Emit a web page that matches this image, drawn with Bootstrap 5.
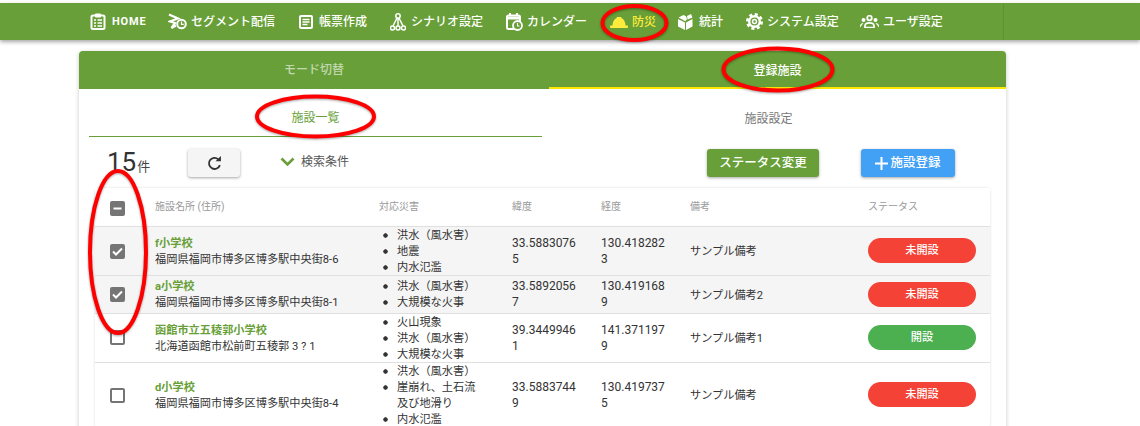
<!DOCTYPE html>
<html lang="ja">
<head>
<meta charset="utf-8">
<title>施設一覧</title>
<link href="https://cdn.jsdelivr.net/npm/bootstrap@5.3.0/dist/css/bootstrap.min.css" rel="stylesheet">
<style>
html,body{height:426px;overflow:hidden;background:#fff}
body{position:relative;font-family:Roboto,"Noto Sans CJK JP","Liberation Sans",sans-serif;font-size:12px;color:#333;padding-top:3px}
.topbar{height:37px;background:#689f38;box-shadow:0 2px 4px rgba(0,0,0,.35);padding:0 0 0 90px;flex-wrap:nowrap;justify-content:flex-start;align-items:center;position:relative}
.topbar::after{content:"";position:absolute;left:1003px;top:0;bottom:0;width:1px;background:rgba(0,0,0,.08)}
.menu-link{display:flex;align-items:center;color:#fff;text-decoration:none;font-size:12px;font-weight:500;white-space:nowrap;height:37px;padding:0}
.menu-link svg{flex:none;display:block}
.menu-link.is-on{color:#ffeb3b}
.home-text{font-weight:700;letter-spacing:.8px;font-size:11px;padding-top:1px}
.panel{width:927px;margin:11px 0 0 79px;border:0;border-radius:4px;box-shadow:0 1px 4px rgba(0,0,0,.22);height:500px}
.mode-tabs{height:38px;background:#689f38;border-radius:4px 4px 0 0;flex-wrap:nowrap}
.mode-tab{display:flex;align-items:center;justify-content:center;color:rgba(255,255,255,.6);font-size:12px;font-weight:500;text-decoration:none;height:38px;padding:0}
.mode-a{width:470px}
.mode-b{width:457px;color:#fff;border-bottom:2px solid #ffe600;padding:3px 0 0}
.sub-tabs{margin-left:10px;width:907px;height:48px;flex-wrap:nowrap}
.sub-tab{width:453px;display:flex;align-items:center;justify-content:center;color:#777;font-size:12px;text-decoration:none;height:48px;padding:12px 0 0}
.sub-tab.is-on{color:#689f38;border-bottom:1px solid #689f38;padding-top:11px}
.tools{height:28px;margin-top:12px;position:relative}
.count{margin-left:28px;width:80px;font-size:26px;line-height:27px;color:#333;font-weight:400;margin-top:0}
.count small{font-size:13px;color:#444;margin-left:1px}
.tool-btn{height:28px;border:0;border-radius:3px;padding:0;font-size:12.5px;font-weight:500;box-shadow:0 1px 3px rgba(0,0,0,.35);display:flex;align-items:center;justify-content:center;color:#fff}
.reload{width:52px;background:#f5f5f5;color:#333;margin-left:1px}
.cond{margin-left:40px;display:flex;align-items:center;color:#555;font-size:12px;width:427px;padding-bottom:2px}
.cond svg{margin-right:6px}
.state-btn{width:112px;background:#689f38}
.add-btn{width:94px;background:#42a0f5;margin-left:42px}
.sheet{margin:11px 0 0 16px;width:895px;background:#fff;border-radius:4px;box-shadow:0 0 3px rgba(0,0,0,.14)}
.sheet table{table-layout:fixed;width:895px;border-collapse:collapse;margin:0;font-size:11.2px;color:#333}
.sheet th{height:38px;font-weight:400;font-size:10px;color:#999;padding:0;vertical-align:middle;border-bottom:1px solid #e0e0e0;background:#fff}
.sheet td{padding:2px 0 0;height:38px;vertical-align:middle;border-bottom:1px solid #e0e0e0;line-height:16px;background:transparent}
.sheet tr.picked td{background:#f5f5f5}
.sheet td.note-cell{padding-top:3px}
.sheet td.tick-cell,.sheet td.state-cell,.sheet td.num,.sheet td.kind-cell{padding-top:0}
.w-box{width:60px}.w-name{width:224px}.w-kind{width:133px}.w-geo{width:89px}.w-note{width:178px}.w-state{width:122px}
.box{display:block;margin-left:15px;width:15px;height:15px;border:2px solid #757575;border-radius:2px;position:relative;background:#fff}
.box.full{background:#757575}
.box.head-box{margin-top:4px}
.box.low{top:1px}
.box svg{position:absolute;left:-2px;top:-2px}
.facility{color:#689f38;font-weight:700;display:block;font-size:11.2px}
.kinds{margin:1px 0 -1px;padding:0;list-style:none;width:105px;line-height:16px;font-size:11.2px}
.kinds li{padding-left:18px;background:radial-gradient(circle at 2.5px 2.5px,#333 1.9px,transparent 2.5px) no-repeat 4px 5px/5px 5px}
.num{padding-right:24px!important;word-break:break-all;font-size:12px}
.pill{display:block;width:108px;height:25px;line-height:25px;border-radius:13px;text-align:center;color:#fff;font-size:11.2px;font-weight:500}
.pill.off{background:#f44336}
.pill.on{background:#4caf50}
.marks{position:absolute;left:0;top:0;pointer-events:none;z-index:5}
.marks ellipse{fill:none;stroke:#f00;stroke-width:4;filter:drop-shadow(0 1px 1px rgba(0,0,0,.35))}
</style>
</head>
<body>
<nav class="navbar topbar gap-0">
  <a class="menu-link" href="#" style="width:78px"><svg width="16" height="17" viewBox="0 0 16 17" style="margin-right:6px"><rect x="1.500" y="2.500" width="13" height="13.500" rx="1.500" fill="none" stroke="#fff" stroke-width="2"/><rect x="5" y="0.500" width="6" height="4" rx="1" fill="#fff"/><path d="M4 7h2M4 10h2M4 13h2M7.500 7H12M7.500 10H12M7.500 13H12" stroke="#fff" stroke-width="1.500"/></svg><span class="home-text">HOME</span></a>
  <a class="menu-link" href="#" style="width:130px"><svg width="19" height="17" viewBox="0 0 19 17" style="margin-right:4px"><path d="M1 1.500l9 4L2 8.500l5 1.500-3.500 5 4.500-2.500" fill="none" stroke="#fff" stroke-width="2.200"/><circle cx="13.500" cy="11" r="4.300" fill="#689f38" stroke="#fff" stroke-width="2"/><path d="M13.500 8.500v2.800h2.300" fill="none" stroke="#fff" stroke-width="1.200"/></svg>セグメント配信</a>
  <a class="menu-link" href="#" style="width:92px"><svg width="14" height="14" viewBox="0 0 14 14" style="margin-left:1px;margin-right:6px"><rect x="1" y="1" width="12" height="12" rx="1" fill="none" stroke="#fff" stroke-width="2"/><path d="M3.500 4.500h7M3.500 7h7M3.500 9.500h5" stroke="#fff" stroke-width="1.300"/></svg>帳票作成</a>
  <a class="menu-link" href="#" style="width:116px"><svg width="16" height="18" viewBox="0 0 16 18" style="margin-right:5px"><circle cx="8" cy="3" r="2.200" fill="none" stroke="#fff" stroke-width="1.500"/><circle cx="2.500" cy="15" r="2" fill="none" stroke="#fff" stroke-width="1.500"/><circle cx="8" cy="15" r="2" fill="none" stroke="#fff" stroke-width="1.500"/><circle cx="13.500" cy="15" r="2" fill="none" stroke="#fff" stroke-width="1.500"/><path d="M7 5L3 13M8 5v8M9 5l4 8" stroke="#fff" stroke-width="1.500"/></svg>シナリオ設定</a>
  <a class="menu-link" href="#" style="width:104px"><svg width="17" height="18" viewBox="0 0 17 18" style="margin-right:4px"><rect x="1" y="2.500" width="13" height="13.500" rx="1.500" fill="none" stroke="#fff" stroke-width="2"/><path d="M1 5h13" stroke="#fff" stroke-width="3"/><path d="M4 0v3M11 0v3" stroke="#fff" stroke-width="2"/><circle cx="11.500" cy="12.500" r="4.500" fill="#689f38" stroke="#fff" stroke-width="1.800"/><path d="M11.500 10v3h2" fill="none" stroke="#fff" stroke-width="1.100"/></svg>カレンダー</a>
  <a class="menu-link is-on" href="#" style="width:68px"><svg width="18" height="12" viewBox="0 0 18 12" style="margin-right:4px"><path d="M2.500 9.500C2.500 6 4.200 3 6.700 2V1h4.600v1c2.500 1 4.200 4 4.200 7.500zM1 9.500h16c.8 0 1 .6 1 1.200 0 .8-.4 1.300-1 1.300H1c-.6 0-1-.5-1-1.300 0-.6.200-1.200 1-1.200z" fill="#ffeb3b"/></svg>防災</a>
  <a class="menu-link" href="#" style="width:68px"><svg width="15" height="16" viewBox="0 0 15 16" style="margin-right:6px"><path d="M0 5l7 3.500V16L0 12.500zM8 8.500L14.500 5v7.500L8 16zM.5 3.500L5.500 1 8 2.200 9 5 7.400 7.300zM9 2L13 0l1.500 3.500L9.500 5.500z" fill="#fff"/></svg>統計</a>
  <a class="menu-link" href="#" style="width:114px"><svg width="17" height="17" viewBox="0 0 17 17" style="margin-right:4px"><circle cx="8.500" cy="8.500" r="5.300" fill="none" stroke="#fff" stroke-width="2.400"/><circle cx="8.500" cy="8.500" r="7" fill="none" stroke="#fff" stroke-width="3" stroke-dasharray="3 2.500"/><circle cx="8.500" cy="8.500" r="2" fill="none" stroke="#fff" stroke-width="1.500"/></svg>システム設定</a>
  <a class="menu-link" href="#"><svg width="19" height="13" viewBox="0 0 19 13" style="margin-right:4px"><circle cx="9.500" cy="3" r="2.300" fill="none" stroke="#fff" stroke-width="1.800"/><circle cx="3.500" cy="5" r="2" fill="#fff"/><circle cx="15.500" cy="5" r="2" fill="#fff"/><path d="M5 12.500V11c0-2 2-3.200 4.500-3.200S14 9 14 11v1.500z" fill="none" stroke="#fff" stroke-width="1.700"/><path d="M0 12.500v-1.500C0 9 1.500 8 3.500 8zM19 12.500v-1.500c0-2-1.500-3-3.500-3z" fill="#fff"/></svg>ユーザ設定</a>
</nav>

<main class="card panel">
  <div class="nav mode-tabs">
    <a class="mode-tab mode-a" href="#">モード切替</a>
    <a class="mode-tab mode-b" href="#">登録施設</a>
  </div>
  <div class="nav sub-tabs">
    <a class="sub-tab is-on" href="#">施設一覧</a>
    <a class="sub-tab" href="#">施設設定</a>
  </div>
  <div class="d-flex tools">
    <div class="count">15<small>件</small></div>
    <button class="btn tool-btn reload" type="button" aria-label="再読込"><svg width="15" height="15" viewBox="0 0 14 14"><path d="M12 8.500A5.200 5.200 0 1 1 10.500 3" fill="none" stroke="#333" stroke-width="1.700"/><path d="M8 5h5V0z" fill="#333"/></svg></button>
    <div class="cond"><svg width="15" height="10" viewBox="0 0 15 10"><path d="M1.500 1.500L7.500 7.500 13.500 1.500" fill="none" stroke="#689f38" stroke-width="2.600"/></svg>検索条件</div>
    <button class="btn tool-btn state-btn" type="button">ステータス変更</button>
    <button class="btn tool-btn add-btn" type="button"><svg width="13" height="13" viewBox="0 0 13 13" style="margin-right:2px"><path d="M6.500 0v13M0 6.500h13" stroke="#fff" stroke-width="2"/></svg>施設登録</button>
  </div>
  <div class="sheet">
    <table class="table">
      <colgroup><col class="w-box"><col class="w-name"><col class="w-kind"><col class="w-geo"><col class="w-geo"><col class="w-note"><col class="w-state"></colgroup>
      <thead><tr>
        <th><span class="box full head-box"><svg width="15" height="15" viewBox="0 0 15 15"><path d="M3.500 7.500h8" stroke="#fff" stroke-width="2"/></svg></span></th>
        <th>施設名所 (住所)</th><th>対応災害</th><th>緯度</th><th>経度</th><th>備考</th><th>ステータス</th>
      </tr></thead>
      <tbody>
        <tr class="picked">
          <td class="tick-cell"><span class="box full low"><svg width="15" height="15" viewBox="0 0 15 15"><path d="M3 7.500l3 3 6-6" fill="none" stroke="#fff" stroke-width="2"/></svg></span></td>
          <td><span class="facility">f小学校</span>福岡県福岡市博多区博多駅中央街8-6</td>
          <td class="kind-cell"><ul class="kinds"><li>洪水（風水害）</li><li>地震</li><li>内水氾濫</li></ul></td>
          <td class="num">33.58830765</td><td class="num">130.4182823</td><td class="note-cell">サンプル備考</td><td class="state-cell"><span class="pill off">未開設</span></td>
        </tr>
        <tr class="picked">
          <td class="tick-cell"><span class="box full"><svg width="15" height="15" viewBox="0 0 15 15"><path d="M3 7.500l3 3 6-6" fill="none" stroke="#fff" stroke-width="2"/></svg></span></td>
          <td><span class="facility">a小学校</span>福岡県福岡市博多区博多駅中央街8-1</td>
          <td class="kind-cell"><ul class="kinds"><li>洪水（風水害）</li><li>大規模な火事</li></ul></td>
          <td class="num">33.58920567</td><td class="num">130.4191689</td><td class="note-cell">サンプル備考2</td><td class="state-cell"><span class="pill off">未開設</span></td>
        </tr>
        <tr>
          <td class="tick-cell"><span class="box"></span></td>
          <td><span class="facility">函館市立五稜郭小学校</span>北海道函館市松前町五稜郭 3 ? 1</td>
          <td class="kind-cell"><ul class="kinds"><li>火山現象</li><li>洪水（風水害）</li><li>大規模な火事</li></ul></td>
          <td class="num">39.34499461</td><td class="num">141.3711979</td><td class="note-cell">サンプル備考1</td><td class="state-cell"><span class="pill on">開設</span></td>
        </tr>
        <tr>
          <td class="tick-cell"><span class="box low"></span></td>
          <td><span class="facility">d小学校</span>福岡県福岡市博多区博多駅中央街8-4</td>
          <td class="kind-cell"><ul class="kinds"><li>洪水（風水害）</li><li>崖崩れ、土石流及び地滑り</li><li>内水氾濫</li></ul></td>
          <td class="num">33.58837449</td><td class="num">130.4197375</td><td class="note-cell">サンプル備考</td><td class="state-cell"><span class="pill off">未開設</span></td>
        </tr>
      </tbody>
    </table>
  </div>
</main>

<svg class="marks" width="1140" height="426" aria-hidden="true">
  <ellipse cx="634.500" cy="23" rx="32" ry="17"/>
  <ellipse cx="778" cy="69.500" rx="54.500" ry="21"/>
  <ellipse cx="315.500" cy="116.500" rx="58.500" ry="20"/>
  <ellipse cx="118" cy="252" rx="28" ry="81"/>
</svg>
<script src="https://cdn.jsdelivr.net/npm/bootstrap@5.3.0/dist/js/bootstrap.bundle.min.js"></script>
</body>
</html>
